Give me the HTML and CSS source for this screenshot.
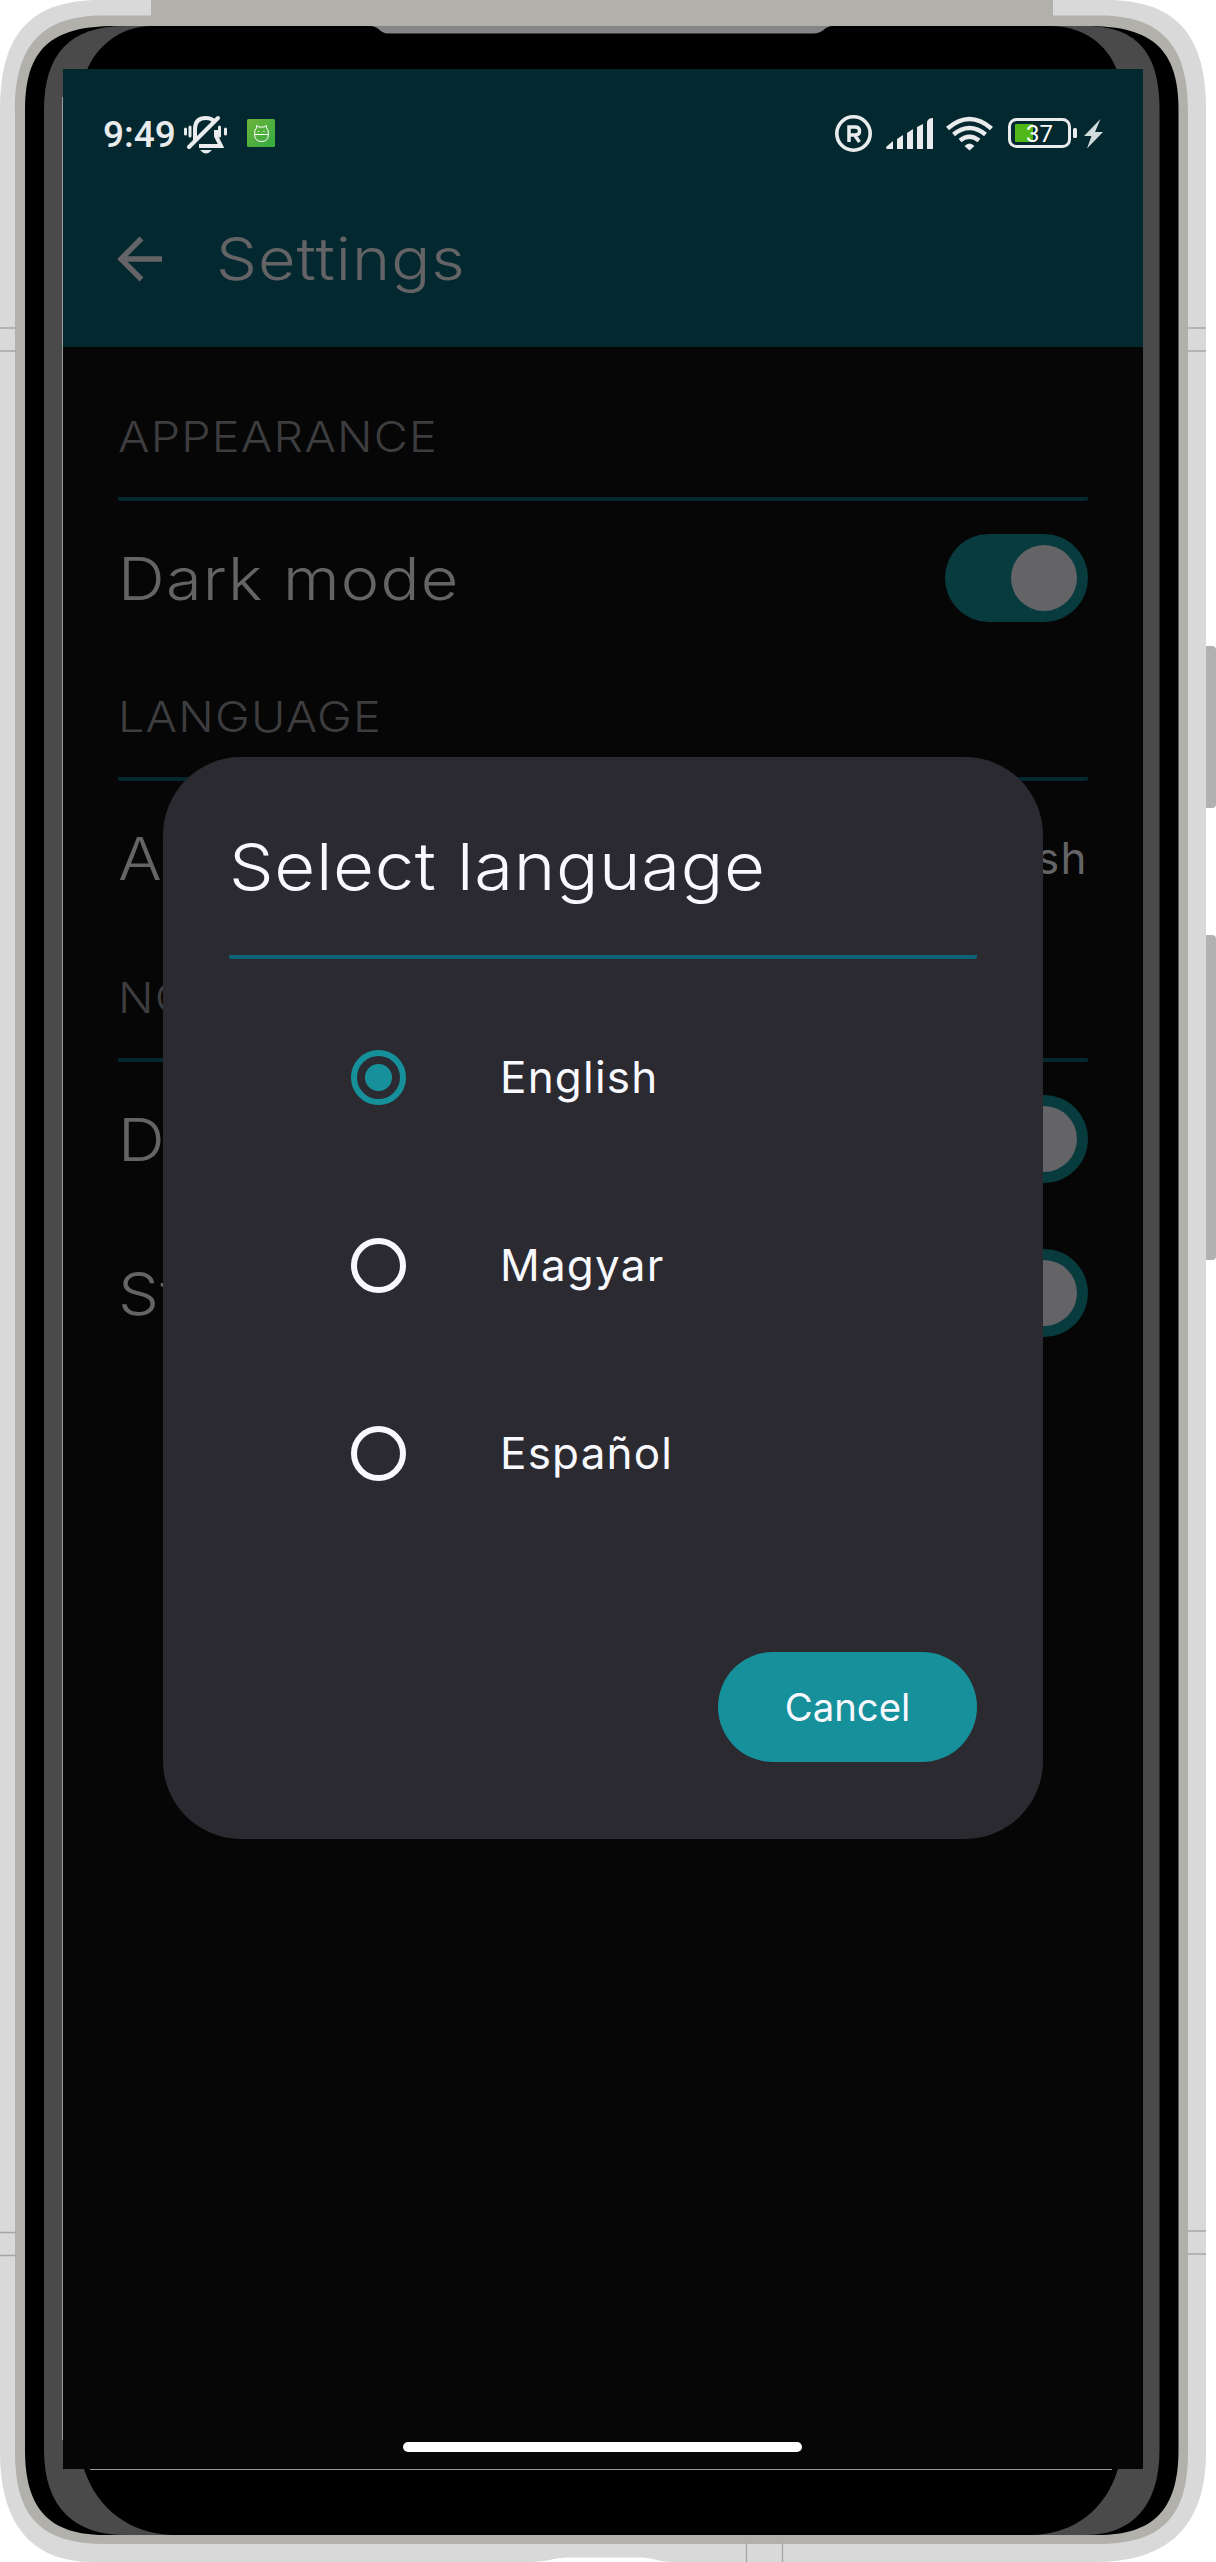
FILE: index.html
```
<!DOCTYPE html>
<html lang="en">
<head>
<meta charset="utf-8">
<title>Settings</title>
<link rel="stylesheet" href="styles.css">
</head>
<body>
<div class="phone">
  <svg class="shell" width="1216" height="2562" viewBox="0 0 1216 2562" aria-hidden="true">
    <path fill="#b1b1b1" d="M1206 646h6q4 0 4 4v154q0 4-4 4h-6zM1206 935h6q4 0 4 4v317q0 4-4 4h-6z"/>
    <path fill="#d9d9d9" d="M0 110C0 40 25 0 100 0H1106C1181 0 1206 40 1206 110V2452C1206 2522 1172 2562 1096 2562H92C30 2562 0 2522 0 2452Z"/>
    <path fill="#b1b0ab" d="M15 110C15 44 43 15 105 15.500H151V0H1053V15.500H1098C1160 15 1188 44 1188 110V2452C1188 2516 1163 2544 1098 2544H105C40 2544 15 2516 15 2452Z"/>
    <path fill="#000" d="M25 110C25 50 50 26 115 26H1088C1153 26 1178.500 50 1178.500 110V2450C1178.500 2510 1153 2535 1098 2535H105C50 2535 25 2510 25 2450Z"/>
    <path fill="#4a4a4a" d="M44 110C44 54 70 26 125 26H1085C1140 26 1159.500 56 1159.500 110V2450C1159.500 2508 1130 2535 1085 2535H125C75 2535 44 2508 44 2450Z"/>
    <path fill="#000" d="M87 70C96 48 119 26 152 26H1050C1083 26 1107 44 1117 70V2469H1118C1106 2509 1074 2535 1030 2535H175C131 2535 97 2509 84 2469Z"/>
    <path fill="#858585" d="M370 26H833C824 26 824 33.500 813 33.500H388C380 33.500 379 26 370 26Z"/>
    <path fill="#fff" d="M530 2562C550 2562 552 2557.500 570 2557.500H640C655 2557.500 655 2562 675 2562Z"/>
    <path stroke="#a6a6a6" stroke-width="1.300" d="M0 328H16M0 351H16M0 2232.500H16M0 2255.500H16M1188 328h18M1188 351h18M1188 2231h18M1188 2254h18M746.500 2543v19M782.500 2543v19"/>
    <path stroke="#9a9a9a" d="M62.500 97V2440M90 2469.500H1112"/>
  </svg>

  <main class="screen">
    <header class="topbar">
      <div class="status">
        <span class="clock">9:49</span>
        <svg class="bell" width="46" height="40" viewBox="0 0 46 40" fill="none" stroke="#e9ebec">
          <path stroke-width="4" d="M13 25V14Q13 3 24 3Q29 3 32 6M34 15V21L39 31H17"/>
          <path stroke-width="4" stroke-linecap="round" d="M7 32L36 3"/>
          <path stroke-width="3" stroke-linecap="round" d="M3.500 14v5M8 12v9M37.500 12v9M43.500 14v5"/>
          <path fill="#e9ebec" stroke="none" d="M18 35H30Q24 42 18 35Z"/>
        </svg>
        <svg class="droid" width="28" height="28" viewBox="0 0 28 28">
          <defs><linearGradient id="g" x2="1" y2="1"><stop stop-color="#6cb33b"/><stop offset="1" stop-color="#35ab42"/></linearGradient></defs>
          <rect width="28" height="28" rx="1.500" fill="url(#g)"/>
          <path fill="none" stroke="#fff" d="M7.500 15.500Q7.500 10 9.500 9V6.500L12 8H17L19.500 6.500V9Q21.500 10 21.500 15.500ZM7.500 15.500Q8 22.500 14.500 22.500Q21 22.500 21.500 15.500M11 12.500h1M16.500 12.500h1"/>
        </svg>
        <svg class="indicators" width="270" height="40" viewBox="0 0 270 40" fill="#e9ebec">
          <circle cx="18.500" cy="18.500" r="16.700" fill="none" stroke="#e9ebec" stroke-width="3.600"/>
          <path fill="none" stroke="#e9ebec" stroke-width="3.500" d="M14 27V12H20Q24.500 12 24.500 16Q24.500 20 20 20H14M19.500 20L24.500 27"/>
          <path d="M51 32L58 26V34H52Q51 34 51 32ZM62 24L68 20V34H62ZM72 18L78 14V34H72ZM82 12L88 9V34H82ZM92 7Q93 3 98 3V34H92Z"/>
          <g fill="none" stroke="#e9ebec" stroke-width="4.500"><path d="M112.500 13.500Q134.500-5.500 156.500 13.500M118.500 19.500Q134.500 6.500 150.500 19.500M125 25.500Q134.500 18 144 25.500"/></g>
          <path d="M129.500 31Q134.500 26 139.500 31L134.500 35.500Z"/>
          <rect x="174.500" y="4.500" width="60" height="27" rx="7" fill="none" stroke="#e9ebec" stroke-width="3"/>
          <path fill="#4fb818" d="M181 9H198V27H181Q180 27 180 26V10Q180 9 181 9Z"/>
          <rect x="238" y="13" width="4" height="10" rx="1.500"/>
          <text class="charge" x="191" y="27">37</text>
          <path fill="#d3dcdc" d="M265.500 4L249 21H256.500L252 33.500L268 17H260Z"/>
        </svg>
      </div>
      <div class="heading">
        <svg width="46" height="46" viewBox="0 0 46 46" fill="none" stroke="#646366" stroke-width="5.500"><path d="M46 23H5M25.500 2.500L5 23L25.500 43.500"/></svg>
        <h1>Settings</h1>
      </div>
    </header>

    <div class="settings">
      <h2><span>APPEARANCE</span></h2>
      <div class="row"><span>Dark mode</span><i class="toggle"></i></div>
      <h2><span>LANGUAGE</span></h2>
      <div class="row"><span>App</span><em>English</em></div>
      <h2 class="notifications"><span>NOTIFICATIONS</span></h2>
      <div class="row"><span>Daily</span><i class="toggle"></i></div>
      <div class="row"><span>Streak</span><i class="toggle"></i></div>
    </div>

    <section class="dialog">
      <h3><span>Select language</span></h3>
      <div class="option"><i class="radio on"></i><span>English</span></div>
      <div class="option"><i class="radio"></i><span>Magyar</span></div>
      <div class="option"><i class="radio"></i><span>Español</span></div>
      <button>Cancel</button>
    </section>
    <div class="homebar"></div>
  </main>
</div>
</body>
</html>
```
FILE: styles.css
```
* { box-sizing: border-box; }
body { margin: 0; background: #fff; font-family: Inter, sans-serif; }
h1, h2, h3 { margin: 0; font-weight: 350; white-space: nowrap; }
i, em { font-style: normal; }
svg { display: block; flex: none; }
.phone { position: relative; width: 1216px; height: 2562px; padding: 69px 73px 93px 63px; overflow: hidden; }
.shell { position: absolute; left: 0; top: 0; }
.screen { position: relative; height: 2400px; background: #060606; overflow: hidden; }

.topbar { height: 278px; background: #042830; }
.status { display: flex; align-items: flex-start; height: 160px; padding: 46px 38px 0 40px; }
.clock { width: 79px; font: 500 37px/40px Roboto, sans-serif; color: #e9ebec; }
.droid { margin: 4px 0 0 19px; }
.indicators { margin-left: auto; }
.charge { font: 400 24px Roboto, sans-serif; fill: #fff; }
.heading { display: flex; align-items: center; height: 60px; padding-left: 53px; gap: 54px; color: #646366; }
.heading h1 { font-size: 59px; line-height: 60px; letter-spacing: .9px; }

.heading h1, .settings h2 span, .row span { transform: scaleX(1.1); transform-origin: left; }

.settings { padding: 60px 55px 0; color: #646366; }
.settings h2 { display: flex; height: 94px; border-bottom: 4px solid #042830; border-radius: 2px; font-size: 42.500px; line-height: 60px; letter-spacing: 1.100px; color: #3d3d3f; }
.row { display: flex; align-items: center; justify-content: space-between; height: 154px; }
.row + h2 { margin-top: 32px; }
.row + .notifications { margin-top: 33px; }
.row span { font-size: 59px; font-weight: 350; letter-spacing: 1.100px; }
.row em { font-size: 44px; letter-spacing: 1.400px; }
.toggle { display: flex; width: 143px; height: 88px; padding: 11px; border-radius: 44px; background: #083b3e; }
.toggle::after { content: ""; width: 66px; height: 66px; margin-left: auto; border-radius: 50%; background: #646366; }

.dialog { position: absolute; left: 100px; top: 688px; width: 880px; height: 1082px; padding: 66px; border-radius: 78px; background: #2b2a30; color: #f8f8ff; display: flex; flex-direction: column; }
.dialog h3 { display: flex; height: 136px; border-bottom: 4px solid #0b6376; border-radius: 2px; font-size: 65px; line-height: 88px; letter-spacing: .6px; }
.dialog h3 span { transform: scaleX(1.087); transform-origin: left; }
.option { display: flex; align-items: center; height: 188px; padding-left: 122px; gap: 94px; font-size: 44px; letter-spacing: 1.200px; }
.dialog h3 + .option { margin-top: 24px; }
.radio { width: 55px; height: 55px; border: 6px solid #f8f8ff; border-radius: 50%; }
.radio.on { border-color: #16919b; background: radial-gradient(#16919b 13px, transparent 14px); }
.dialog button { width: 259px; height: 110px; margin: auto 0 11px auto; border: 0; border-radius: 55px; background: #16919b; color: #f8f8ff; font: 400 38.300px Inter, sans-serif; }
.homebar { position: absolute; left: 340px; bottom: 17px; width: 399px; height: 10px; border-radius: 5px; background: #fff; }
```
